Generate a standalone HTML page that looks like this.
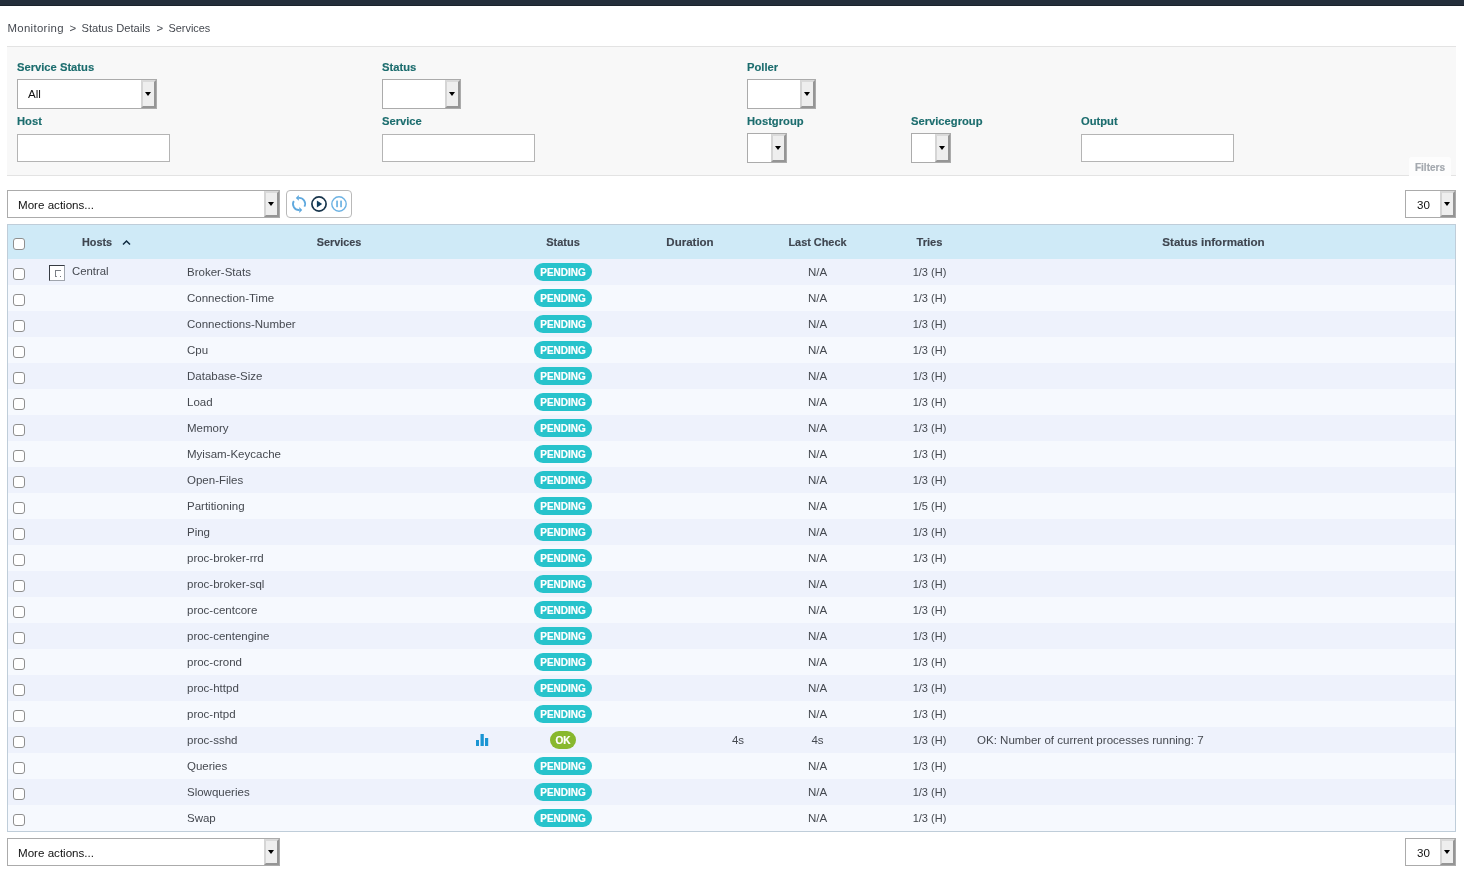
<!DOCTYPE html><html><head><meta charset="utf-8"><style>
*{box-sizing:border-box}
html,body{margin:0;padding:0;background:#fff;width:1464px;height:874px;overflow:hidden;position:relative;font-family:"Liberation Sans",sans-serif;}
.a{position:absolute}
.wrap{position:absolute;left:0;top:0;width:1464px;height:874px;will-change:transform}
.topbar{left:0;top:0;width:1464px;height:5px;background:#242e3b;border-bottom:1px solid #1b222b;height:6px}
.bc{top:21px;font-size:11.4px;color:#454950;white-space:nowrap;line-height:14px}
.panel{left:7px;top:46px;width:1449px;height:130px;background:#f8f8f8;border-top:1px solid #e3e3e3;border-bottom:1px solid #e3e3e3}
.lbl{font-size:11.2px;font-weight:bold;color:#1c6d6e;-webkit-text-stroke:0.15px #1c6d6e;white-space:nowrap;line-height:14px}
.inp{background:#fff;border:1px solid #b4b4b4}
.sel{background:#fff;border:1px solid #ababab}
.btn{width:15px;background:#eeeeee;border-left:2px solid #d5d5d5;border-top:2px solid #dadada;border-right:2px solid #959595;border-bottom:2px solid #959595}
.arr{width:0;height:0;border-left:3.5px solid transparent;border-right:3.5px solid transparent;border-top:4px solid #000}
.seltxt{font-size:11.6px;color:#111;white-space:nowrap;line-height:14px}
.filt{left:1409px;top:157px;width:42px;height:19px;background:#fdfdfd;border-radius:3px 3px 0 0;font-size:10px;font-weight:bold;color:#a4a9af;-webkit-text-stroke:0.2px #a4a9af;text-align:center;line-height:21px}
.tbl{left:7px;top:224px;width:1449px;height:608px;border:1px solid #bfcdd9;background:#f5f8fe}
.th{left:8px;top:225px;width:1447px;height:34px;background:#cfeaf7}
.htxt{font-size:11px;font-weight:bold;color:#3f4650;-webkit-text-stroke:0.15px #3f4650;white-space:nowrap;line-height:14px;top:235px}
.row{left:8px;width:1447px;height:26px}
.odd{background:#eef2fc}
.even{background:#f6f9fe}
.cb{width:12px;height:12px;border:1px solid #8f8f8f;border-radius:3px;background:#fff;left:13px}
.t{font-size:11.5px;color:#454950;white-space:nowrap;line-height:14px}
.c{text-align:center}
.pill{left:534px;width:58px;height:18px;border-radius:9px;background:#27c3cc;color:#fff;font-size:10px;font-weight:bold;text-align:center;line-height:20px;-webkit-text-stroke:0.2px #fff}
.ok{left:550px;width:26px;background:#88b82e}
</style></head><body><div class="wrap">
<div class="a topbar"></div>
<div class="a bc" style="left:7.5px;font-size:11.4px;letter-spacing:0.32px">Monitoring</div>
<div class="a bc" style="left:69.5px">&gt;</div>
<div class="a bc" style="left:81.5px;font-size:11.15px">Status Details</div>
<div class="a bc" style="left:156.5px">&gt;</div>
<div class="a bc" style="left:168.5px;font-size:10.9px">Services</div>
<div class="a panel"></div>
<div class="a lbl" style="left:17px;top:60px">Service Status</div>
<div class="a sel" style="left:17px;top:79px;width:140px;height:30px"></div><div class="a seltxt" style="left:28px;top:87px;font-size:11.6px">All</div><div class="a btn" style="left:141px;top:80px;height:28px"></div><div class="a arr" style="left:145px;top:92px"></div>
<div class="a lbl" style="left:382px;top:60px">Status</div>
<div class="a sel" style="left:382px;top:79px;width:79px;height:30px"></div><div class="a btn" style="left:445px;top:80px;height:28px"></div><div class="a arr" style="left:449px;top:92px"></div>
<div class="a lbl" style="left:747px;top:60px">Poller</div>
<div class="a sel" style="left:747px;top:79px;width:69px;height:30px"></div><div class="a btn" style="left:800px;top:80px;height:28px"></div><div class="a arr" style="left:804px;top:92px"></div>
<div class="a lbl" style="left:17px;top:114px">Host</div>
<div class="a inp" style="left:17px;top:134px;width:153px;height:28px"></div>
<div class="a lbl" style="left:382px;top:114px">Service</div>
<div class="a inp" style="left:382px;top:134px;width:153px;height:28px"></div>
<div class="a lbl" style="left:747px;top:114px">Hostgroup</div>
<div class="a sel" style="left:747px;top:133px;width:40px;height:30px"></div><div class="a btn" style="left:771px;top:134px;height:28px"></div><div class="a arr" style="left:775px;top:146px"></div>
<div class="a lbl" style="left:911px;top:114px">Servicegroup</div>
<div class="a sel" style="left:911px;top:133px;width:40px;height:30px"></div><div class="a btn" style="left:935px;top:134px;height:28px"></div><div class="a arr" style="left:939px;top:146px"></div>
<div class="a lbl" style="left:1081px;top:114px">Output</div>
<div class="a inp" style="left:1081px;top:134px;width:153px;height:28px"></div>
<div class="a filt">Filters</div>
<div class="a sel" style="left:7px;top:190px;width:273px;height:28px"></div><div class="a seltxt" style="left:18px;top:198px;font-size:11.6px">More actions...</div><div class="a btn" style="left:264px;top:191px;height:26px"></div><div class="a arr" style="left:268px;top:202px"></div>
<div class="a" style="left:286px;top:190px;width:66px;height:28px;border:1px solid #b9b9b9;border-radius:4px;background:#fff"></div>
<svg class="a" style="left:290px;top:194px" width="60" height="20" viewBox="0 0 60 20">
<g fill="none" stroke="#5ea8de" stroke-width="1.8">
<path d="M8.6 3.9 A6 6 0 0 1 14.4 12.7"/>
<path d="M9.4 16 A6 6 0 0 1 3.8 7"/>
</g>
<path d="M5.8 3.9 L8.8 1 L8.8 6.8 Z" fill="#5ea8de"/>
<path d="M12.2 15.9 L9.3 12.9 L9.3 18.9 Z" fill="#5ea8de"/>
<circle cx="29" cy="10" r="7.1" fill="none" stroke="#17344b" stroke-width="1.7"/>
<path d="M26.9 6.5 L32.2 10 L26.9 13.6 Z" fill="#123f5e"/>
<circle cx="49" cy="10" r="7.2" fill="none" stroke="#6cb2e3" stroke-width="1.4"/>
<rect x="46.2" y="6.6" width="1.7" height="6.6" fill="#6cb2e3"/>
<rect x="50.2" y="6.6" width="1.7" height="6.6" fill="#6cb2e3"/>
</svg>
<div class="a sel" style="left:1405px;top:190px;width:51px;height:28px"></div><div class="a seltxt" style="left:1417px;top:198px;font-size:11.6px">30</div><div class="a btn" style="left:1440px;top:191px;height:26px"></div><div class="a arr" style="left:1444px;top:202px"></div>
<div class="a tbl"></div>
<div class="a th"></div>
<div class="a cb" style="top:238px"></div>
<div class="a htxt" style="left:82px;font-size:10.8px">Hosts</div>
<svg class="a" style="left:122px;top:239px" width="9" height="7" viewBox="0 0 9 7"><path d="M1 5.5 L4.5 2 L8 5.5" fill="none" stroke="#0f2b40" stroke-width="1.5"/></svg>
<div class="a htxt c" style="left:239px;width:200px;font-size:10.8px">Services</div>
<div class="a htxt c" style="left:463px;width:200px;font-size:11px">Status</div>
<div class="a htxt c" style="left:590px;width:200px;font-size:11.5px">Duration</div>
<div class="a htxt c" style="left:717.5px;width:200px;font-size:10.9px">Last Check</div>
<div class="a htxt c" style="left:829.5px;width:200px;font-size:11.1px">Tries</div>
<div class="a htxt c" style="left:1113.5px;width:200px;font-size:11.6px">Status information</div>
<div class="a row odd" style="top:259px"></div>
<div class="a cb" style="top:268px"></div>
<div class="a t" style="left:187px;top:265px">Broker-Stats</div>
<div class="a pill" style="top:263px">PENDING</div>
<div class="a t c" style="left:767.5px;width:100px;top:265px">N/A</div>
<div class="a t c" style="left:879.5px;width:100px;top:265px;font-size:11px">1/3 (H)</div>
<div class="a" style="left:49px;top:265px;width:16px;height:16px;border:1px solid #a0a5ad;border-left-color:#363b42;border-top-color:#363b42;background:#fff"></div>
<div class="a" style="left:55px;top:270px;width:6px;height:7px;border-left:1px solid #7a7e84;border-top:1px solid #7a7e84"></div>
<div class="a" style="left:60px;top:276px;width:1px;height:1px;background:#6e7278"></div>
<div class="a" style="left:56px;top:276px;width:1px;height:1px;background:#8a8e94"></div>
<div class="a t" style="left:72px;top:264px;font-size:11.35px">Central</div>
<div class="a row even" style="top:285px"></div>
<div class="a cb" style="top:294px"></div>
<div class="a t" style="left:187px;top:291px">Connection-Time</div>
<div class="a pill" style="top:289px">PENDING</div>
<div class="a t c" style="left:767.5px;width:100px;top:291px">N/A</div>
<div class="a t c" style="left:879.5px;width:100px;top:291px;font-size:11px">1/3 (H)</div>
<div class="a row odd" style="top:311px"></div>
<div class="a cb" style="top:320px"></div>
<div class="a t" style="left:187px;top:317px">Connections-Number</div>
<div class="a pill" style="top:315px">PENDING</div>
<div class="a t c" style="left:767.5px;width:100px;top:317px">N/A</div>
<div class="a t c" style="left:879.5px;width:100px;top:317px;font-size:11px">1/3 (H)</div>
<div class="a row even" style="top:337px"></div>
<div class="a cb" style="top:346px"></div>
<div class="a t" style="left:187px;top:343px">Cpu</div>
<div class="a pill" style="top:341px">PENDING</div>
<div class="a t c" style="left:767.5px;width:100px;top:343px">N/A</div>
<div class="a t c" style="left:879.5px;width:100px;top:343px;font-size:11px">1/3 (H)</div>
<div class="a row odd" style="top:363px"></div>
<div class="a cb" style="top:372px"></div>
<div class="a t" style="left:187px;top:369px">Database-Size</div>
<div class="a pill" style="top:367px">PENDING</div>
<div class="a t c" style="left:767.5px;width:100px;top:369px">N/A</div>
<div class="a t c" style="left:879.5px;width:100px;top:369px;font-size:11px">1/3 (H)</div>
<div class="a row even" style="top:389px"></div>
<div class="a cb" style="top:398px"></div>
<div class="a t" style="left:187px;top:395px">Load</div>
<div class="a pill" style="top:393px">PENDING</div>
<div class="a t c" style="left:767.5px;width:100px;top:395px">N/A</div>
<div class="a t c" style="left:879.5px;width:100px;top:395px;font-size:11px">1/3 (H)</div>
<div class="a row odd" style="top:415px"></div>
<div class="a cb" style="top:424px"></div>
<div class="a t" style="left:187px;top:421px">Memory</div>
<div class="a pill" style="top:419px">PENDING</div>
<div class="a t c" style="left:767.5px;width:100px;top:421px">N/A</div>
<div class="a t c" style="left:879.5px;width:100px;top:421px;font-size:11px">1/3 (H)</div>
<div class="a row even" style="top:441px"></div>
<div class="a cb" style="top:450px"></div>
<div class="a t" style="left:187px;top:447px">Myisam-Keycache</div>
<div class="a pill" style="top:445px">PENDING</div>
<div class="a t c" style="left:767.5px;width:100px;top:447px">N/A</div>
<div class="a t c" style="left:879.5px;width:100px;top:447px;font-size:11px">1/3 (H)</div>
<div class="a row odd" style="top:467px"></div>
<div class="a cb" style="top:476px"></div>
<div class="a t" style="left:187px;top:473px">Open-Files</div>
<div class="a pill" style="top:471px">PENDING</div>
<div class="a t c" style="left:767.5px;width:100px;top:473px">N/A</div>
<div class="a t c" style="left:879.5px;width:100px;top:473px;font-size:11px">1/3 (H)</div>
<div class="a row even" style="top:493px"></div>
<div class="a cb" style="top:502px"></div>
<div class="a t" style="left:187px;top:499px">Partitioning</div>
<div class="a pill" style="top:497px">PENDING</div>
<div class="a t c" style="left:767.5px;width:100px;top:499px">N/A</div>
<div class="a t c" style="left:879.5px;width:100px;top:499px;font-size:11px">1/5 (H)</div>
<div class="a row odd" style="top:519px"></div>
<div class="a cb" style="top:528px"></div>
<div class="a t" style="left:187px;top:525px">Ping</div>
<div class="a pill" style="top:523px">PENDING</div>
<div class="a t c" style="left:767.5px;width:100px;top:525px">N/A</div>
<div class="a t c" style="left:879.5px;width:100px;top:525px;font-size:11px">1/3 (H)</div>
<div class="a row even" style="top:545px"></div>
<div class="a cb" style="top:554px"></div>
<div class="a t" style="left:187px;top:551px">proc-broker-rrd</div>
<div class="a pill" style="top:549px">PENDING</div>
<div class="a t c" style="left:767.5px;width:100px;top:551px">N/A</div>
<div class="a t c" style="left:879.5px;width:100px;top:551px;font-size:11px">1/3 (H)</div>
<div class="a row odd" style="top:571px"></div>
<div class="a cb" style="top:580px"></div>
<div class="a t" style="left:187px;top:577px">proc-broker-sql</div>
<div class="a pill" style="top:575px">PENDING</div>
<div class="a t c" style="left:767.5px;width:100px;top:577px">N/A</div>
<div class="a t c" style="left:879.5px;width:100px;top:577px;font-size:11px">1/3 (H)</div>
<div class="a row even" style="top:597px"></div>
<div class="a cb" style="top:606px"></div>
<div class="a t" style="left:187px;top:603px">proc-centcore</div>
<div class="a pill" style="top:601px">PENDING</div>
<div class="a t c" style="left:767.5px;width:100px;top:603px">N/A</div>
<div class="a t c" style="left:879.5px;width:100px;top:603px;font-size:11px">1/3 (H)</div>
<div class="a row odd" style="top:623px"></div>
<div class="a cb" style="top:632px"></div>
<div class="a t" style="left:187px;top:629px">proc-centengine</div>
<div class="a pill" style="top:627px">PENDING</div>
<div class="a t c" style="left:767.5px;width:100px;top:629px">N/A</div>
<div class="a t c" style="left:879.5px;width:100px;top:629px;font-size:11px">1/3 (H)</div>
<div class="a row even" style="top:649px"></div>
<div class="a cb" style="top:658px"></div>
<div class="a t" style="left:187px;top:655px">proc-crond</div>
<div class="a pill" style="top:653px">PENDING</div>
<div class="a t c" style="left:767.5px;width:100px;top:655px">N/A</div>
<div class="a t c" style="left:879.5px;width:100px;top:655px;font-size:11px">1/3 (H)</div>
<div class="a row odd" style="top:675px"></div>
<div class="a cb" style="top:684px"></div>
<div class="a t" style="left:187px;top:681px">proc-httpd</div>
<div class="a pill" style="top:679px">PENDING</div>
<div class="a t c" style="left:767.5px;width:100px;top:681px">N/A</div>
<div class="a t c" style="left:879.5px;width:100px;top:681px;font-size:11px">1/3 (H)</div>
<div class="a row even" style="top:701px"></div>
<div class="a cb" style="top:710px"></div>
<div class="a t" style="left:187px;top:707px">proc-ntpd</div>
<div class="a pill" style="top:705px">PENDING</div>
<div class="a t c" style="left:767.5px;width:100px;top:707px">N/A</div>
<div class="a t c" style="left:879.5px;width:100px;top:707px;font-size:11px">1/3 (H)</div>
<div class="a row odd" style="top:727px"></div>
<div class="a cb" style="top:736px"></div>
<div class="a t" style="left:187px;top:733px">proc-sshd</div>
<div class="a pill ok" style="top:731px">OK</div>
<div class="a t c" style="left:688px;width:100px;top:733px">4s</div>
<div class="a t c" style="left:767.5px;width:100px;top:733px">4s</div>
<div class="a t" style="left:977px;top:733px;font-size:11.55px">OK: Number of current processes running: 7</div>
<svg class="a" style="left:476px;top:734px" width="13" height="13" viewBox="0 0 13 13"><rect x="0" y="6" width="3" height="6" fill="#1a95d3"/><rect x="4.5" y="0" width="3.3" height="12" fill="#1a95d3"/><rect x="9" y="4" width="3.2" height="8" fill="#1a95d3"/></svg>
<div class="a t c" style="left:879.5px;width:100px;top:733px;font-size:11px">1/3 (H)</div>
<div class="a row even" style="top:753px"></div>
<div class="a cb" style="top:762px"></div>
<div class="a t" style="left:187px;top:759px">Queries</div>
<div class="a pill" style="top:757px">PENDING</div>
<div class="a t c" style="left:767.5px;width:100px;top:759px">N/A</div>
<div class="a t c" style="left:879.5px;width:100px;top:759px;font-size:11px">1/3 (H)</div>
<div class="a row odd" style="top:779px"></div>
<div class="a cb" style="top:788px"></div>
<div class="a t" style="left:187px;top:785px">Slowqueries</div>
<div class="a pill" style="top:783px">PENDING</div>
<div class="a t c" style="left:767.5px;width:100px;top:785px">N/A</div>
<div class="a t c" style="left:879.5px;width:100px;top:785px;font-size:11px">1/3 (H)</div>
<div class="a row even" style="top:805px"></div>
<div class="a cb" style="top:814px"></div>
<div class="a t" style="left:187px;top:811px">Swap</div>
<div class="a pill" style="top:809px">PENDING</div>
<div class="a t c" style="left:767.5px;width:100px;top:811px">N/A</div>
<div class="a t c" style="left:879.5px;width:100px;top:811px;font-size:11px">1/3 (H)</div>
<div class="a sel" style="left:7px;top:838px;width:273px;height:28px"></div><div class="a seltxt" style="left:18px;top:846px;font-size:11.6px">More actions...</div><div class="a btn" style="left:264px;top:839px;height:26px"></div><div class="a arr" style="left:268px;top:850px"></div>
<div class="a sel" style="left:1405px;top:838px;width:51px;height:28px"></div><div class="a seltxt" style="left:1417px;top:846px;font-size:11.6px">30</div><div class="a btn" style="left:1440px;top:839px;height:26px"></div><div class="a arr" style="left:1444px;top:850px"></div>
</div></body></html>
